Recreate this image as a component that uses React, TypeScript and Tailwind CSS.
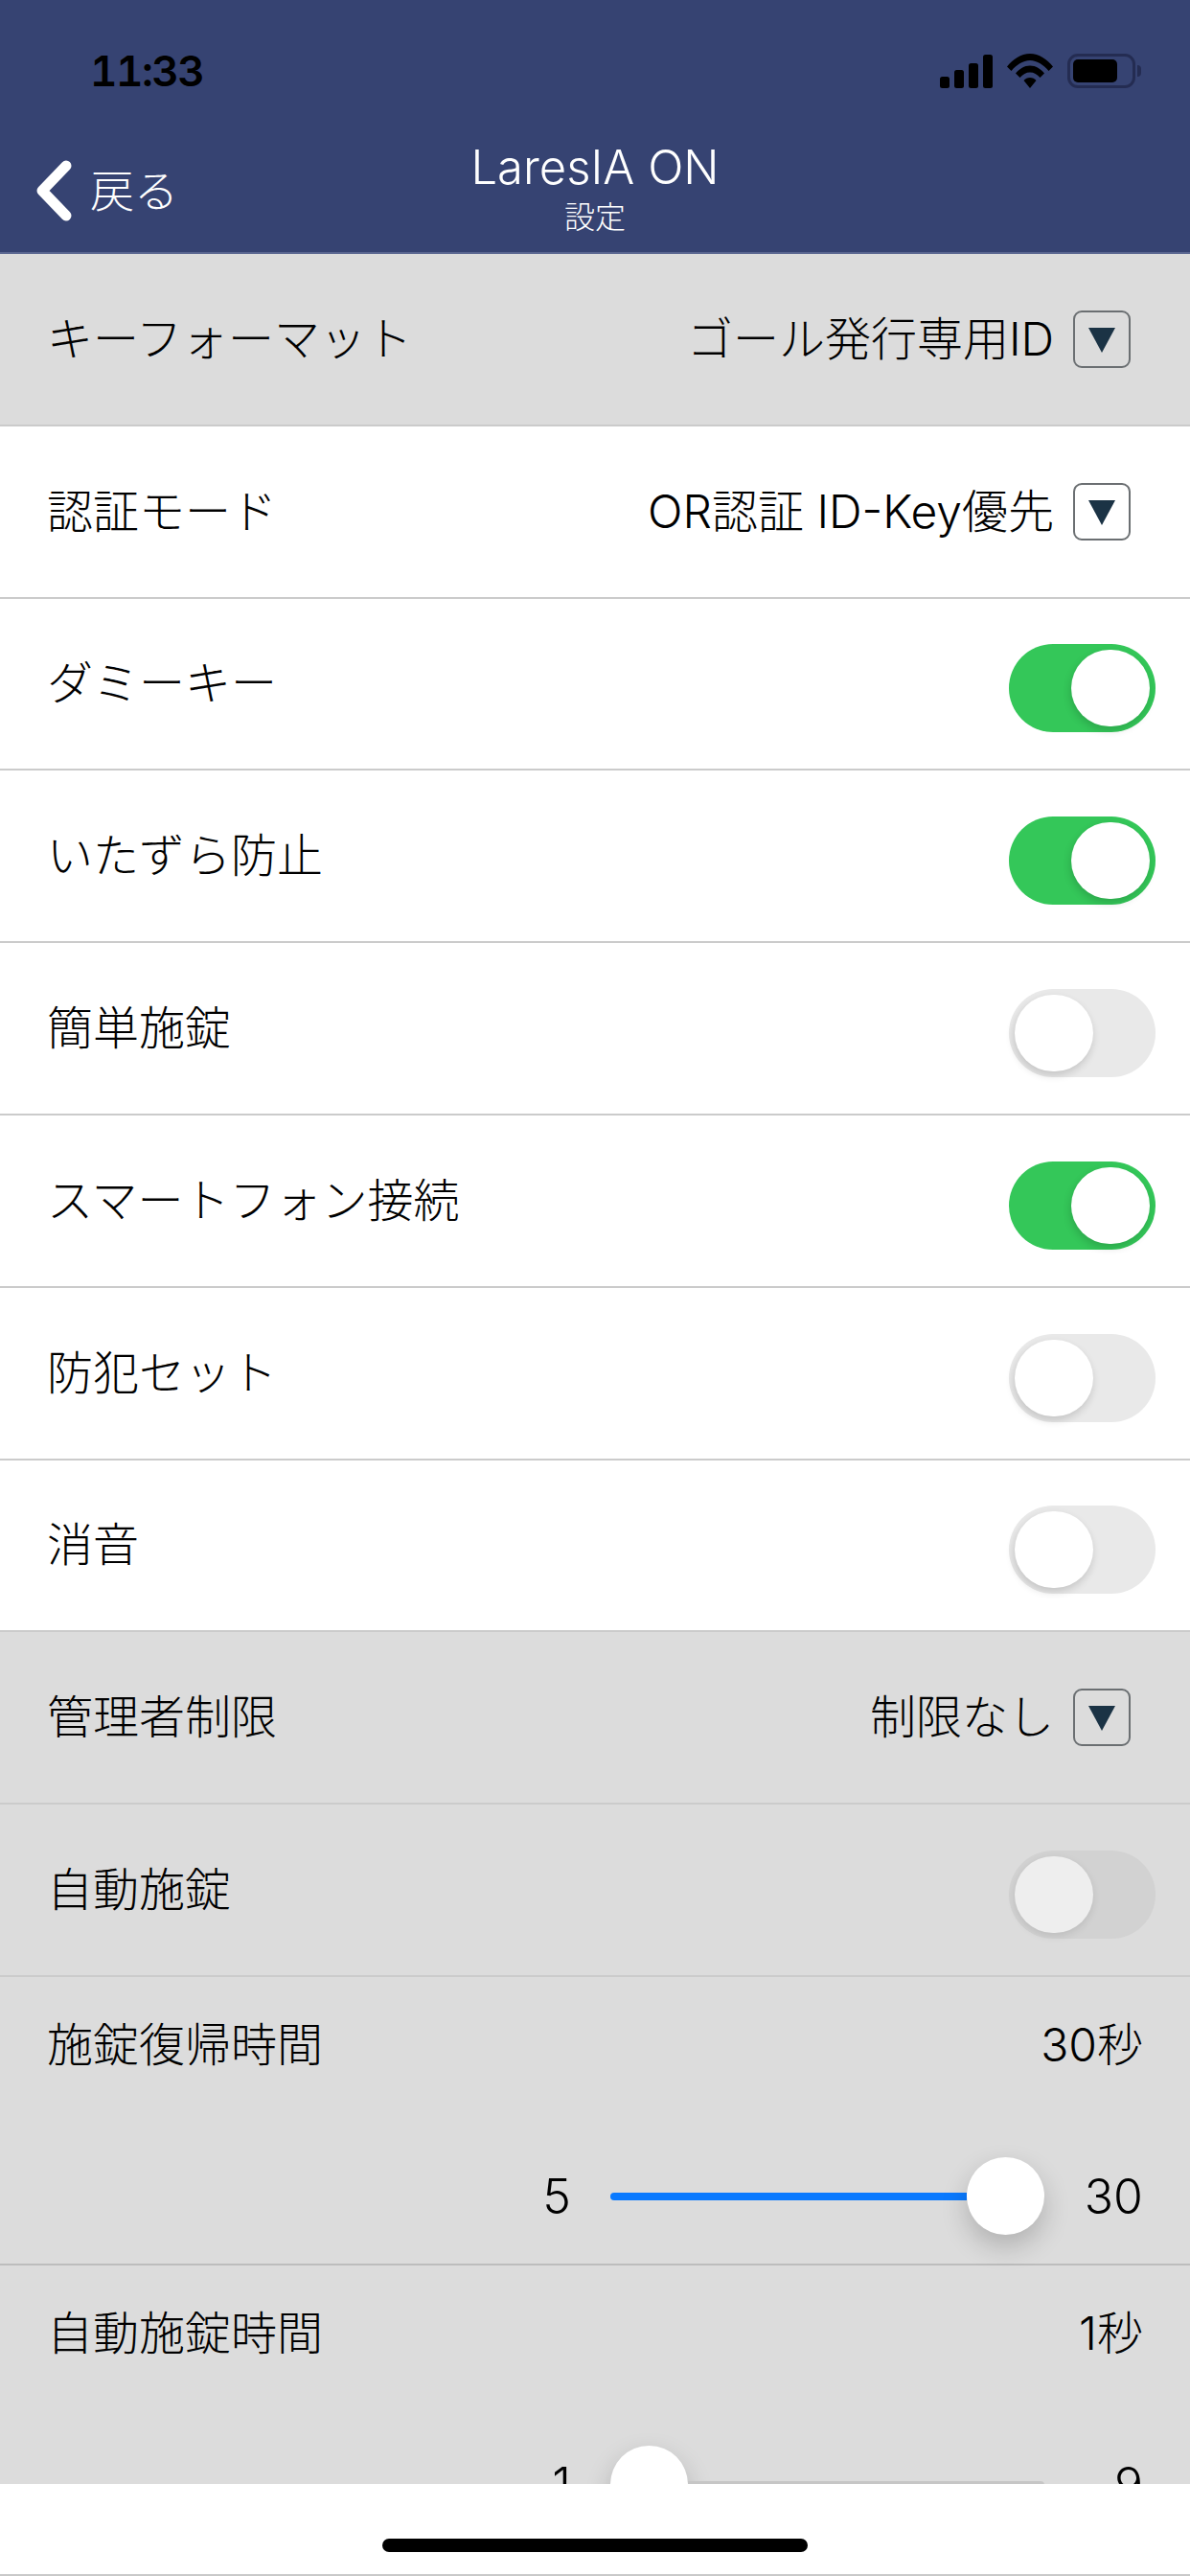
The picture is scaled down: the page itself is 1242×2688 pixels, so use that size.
const jp = "font-['Inter','Noto_Sans_CJK_JP',sans-serif]";

function Dropdown() {
  return (
    <div className="flex h-[60px] w-[60px] items-center justify-center rounded-[9px] border-2 border-[#6b6f72] pt-[2px]">
      <svg width="28" height="26" viewBox="0 0 28 26"><path d="M0 0H28L14 26Z" fill="#1b3345" /></svg>
    </div>
  );
}

function Toggle({ on, disabled }: { on?: boolean; disabled?: boolean }) {
  const track = on ? "bg-[#34c759] justify-end" : disabled ? "bg-[#d2d2d2] justify-start" : "bg-[#e9e9e9] justify-start";
  const knob = disabled ? "bg-[#eeeeee] shadow-[0_3px_8px_rgba(0,0,0,0.1)]" : "bg-white shadow-[-1px_4px_9px_rgba(0,0,0,0.16)]";
  return (
    <div className={`mt-[10px] flex h-[92px] w-[153px] items-center rounded-full p-[6px] ${track}`}>
      <div className={`h-[80px] w-[82px] rounded-full ${knob}`} />
    </div>
  );
}

function Row({ label, gray, children }: { label: string; gray?: boolean; children: React.ReactNode }) {
  return (
    <div className={`flex h-[179.8px] shrink-0 items-center justify-between border-b-2 border-[#cbcbcb] pl-[49px] pr-[36px] ${gray ? "bg-[#dcdcdc]" : "bg-white"}`}>
      <span className="text-[48px] font-light leading-none text-black">{label}</span>
      {children}
    </div>
  );
}

function Select({ value }: { value: string }) {
  return (
    <div className="flex items-center gap-[20px] pr-[26px]">
      <span className="text-[48px] font-light leading-none text-black">{value}</span>
      <Dropdown />
    </div>
  );
}

function SliderRow({ label, value, min, max, start }: { label: string; value: string; min: string; max: string; start?: boolean }) {
  return (
    <div className="flex h-[300.6px] shrink-0 flex-col border-b-2 border-[#bdbdbd] bg-[#dcdcdc] pl-[49px] pr-[49px]">
      <div className="flex h-[142px] shrink-0 items-center justify-between">
        <span className="text-[48px] font-light leading-none text-black">{label}</span>
        <span className="text-[48px] font-light leading-none text-black">{value}</span>
      </div>
      <div className="flex h-[156px] shrink-0 items-center justify-end pt-[18px]">
        <span className="w-[60px] text-right text-[50px] font-light leading-none text-black">{min}</span>
        <div className="ml-[41px] flex w-[453px] items-center">
          {start ? null : <div className="h-[8px] flex-1 rounded-l-full bg-[#0a7aff]" />}
          <div className="h-[81px] w-[81px] shrink-0 rounded-full bg-white shadow-[0_12px_28px_rgba(0,0,0,0.2)]" />
          {start ? <div className="h-[8px] flex-1 rounded-r-full bg-[#c6c6c6]" /> : null}
        </div>
        <span className="w-[103px] text-right text-[50px] font-light leading-none text-black">{max}</span>
      </div>
    </div>
  );
}

function StatusIcons() {
  return (
    <div className="flex items-center">
      <svg width="56" height="35" viewBox="0 0 56 35" fill="#000">
        <rect x="0" y="23" width="10" height="12" rx="2.5" />
        <rect x="15" y="16" width="10" height="19" rx="2.5" />
        <rect x="30" y="9" width="10" height="26" rx="2.5" />
        <rect x="45" y="0" width="10" height="35" rx="2.5" />
      </svg>
      <svg className="ml-[14px]" width="48" height="36" viewBox="0 0 48 36" fill="#000">
        <path d="M0 13.5C6 6 14.5 0 24 0s18 6 24 13.5L43.5 18C38.5 12 31.5 7 24 7S9.500 12 4.500 18Z" />
        <path d="M9 20.500C13 16 18 12.500 24 12.500S35 16 39 20.500L34.500 25C31.500 21.500 28 19.500 24 19.500S16.500 21.500 13.500 25Z" />
        <path d="M17.500 28C19 26.200 21.500 25 24 25s5 1.200 6.500 3L24 36Z" />
      </svg>
      <div className="ml-[15px] flex items-center">
        <div className="flex h-[36px] w-[71px] items-center rounded-[11px] border-[3px] border-[#242c52] p-[3px]">
          <div className="h-[24px] w-[46px] rounded-[5px] bg-black" />
        </div>
        <div className="ml-[2px] h-[12px] w-[4px] rounded-r-full bg-[#242c52]" />
      </div>
    </div>
  );
}

export default function App() {
  return (
    <div className={`flex h-[2688px] w-[1242px] flex-col overflow-hidden bg-white ${jp}`}>
      <header className="h-[265px] shrink-0 border-b-2 border-[#5a6690] bg-[#364372]">
        <div className="flex h-[132px] items-start justify-between pl-[94px] pr-[51px] pt-[56px]">
          <span className="text-[44px] font-semibold leading-[36px] tracking-[-1.5px] tabular-nums text-black">11:33</span>
          <StatusIcons />
        </div>
        <div className="grid grid-cols-[1fr_auto_1fr]">
          <div className="flex items-start pl-[38px] pt-[35px]">
            <svg width="37" height="64" viewBox="0 0 37 64" fill="none" stroke="#fff" strokeWidth="11" strokeLinecap="round" strokeLinejoin="round">
              <path d="M31 6 6 32l25 26" />
            </svg>
            <span className="ml-[19px] mt-[9px] text-[46px] font-light leading-none text-white">戻る</span>
          </div>
          <div className="flex flex-col items-center pt-[15px]">
            <span className="text-[49px] font-light leading-[56px] text-white">LaresIA ON</span>
            <span className="mt-[6px] text-[32px] font-light leading-[36px] text-white">設定</span>
          </div>
          <div />
        </div>
      </header>
      <main className="min-h-0 flex-1 overflow-hidden">
        <Row label="キーフォーマット" gray><Select value="ゴール発行専用ID" /></Row>
        <Row label="認証モード"><Select value="OR認証 ID-Key優先" /></Row>
        <Row label="ダミーキー"><Toggle on /></Row>
        <Row label="いたずら防止"><Toggle on /></Row>
        <Row label="簡単施錠"><Toggle /></Row>
        <Row label="スマートフォン接続"><Toggle on /></Row>
        <Row label="防犯セット"><Toggle /></Row>
        <Row label="消音"><Toggle /></Row>
        <Row label="管理者制限" gray><Select value="制限なし" /></Row>
        <Row label="自動施錠" gray><Toggle disabled /></Row>
        <SliderRow label="施錠復帰時間" value="30秒" min="5" max="30" />
        <SliderRow label="自動施錠時間" value="1秒" min="1" max="9" start />
      </main>
      <footer className="flex h-[96px] shrink-0 items-start justify-center border-b-2 border-[#c9c9c9] bg-white pt-[57px]">
        <div className="h-[14px] w-[444px] rounded-full bg-black" />
      </footer>
    </div>
  );
}
